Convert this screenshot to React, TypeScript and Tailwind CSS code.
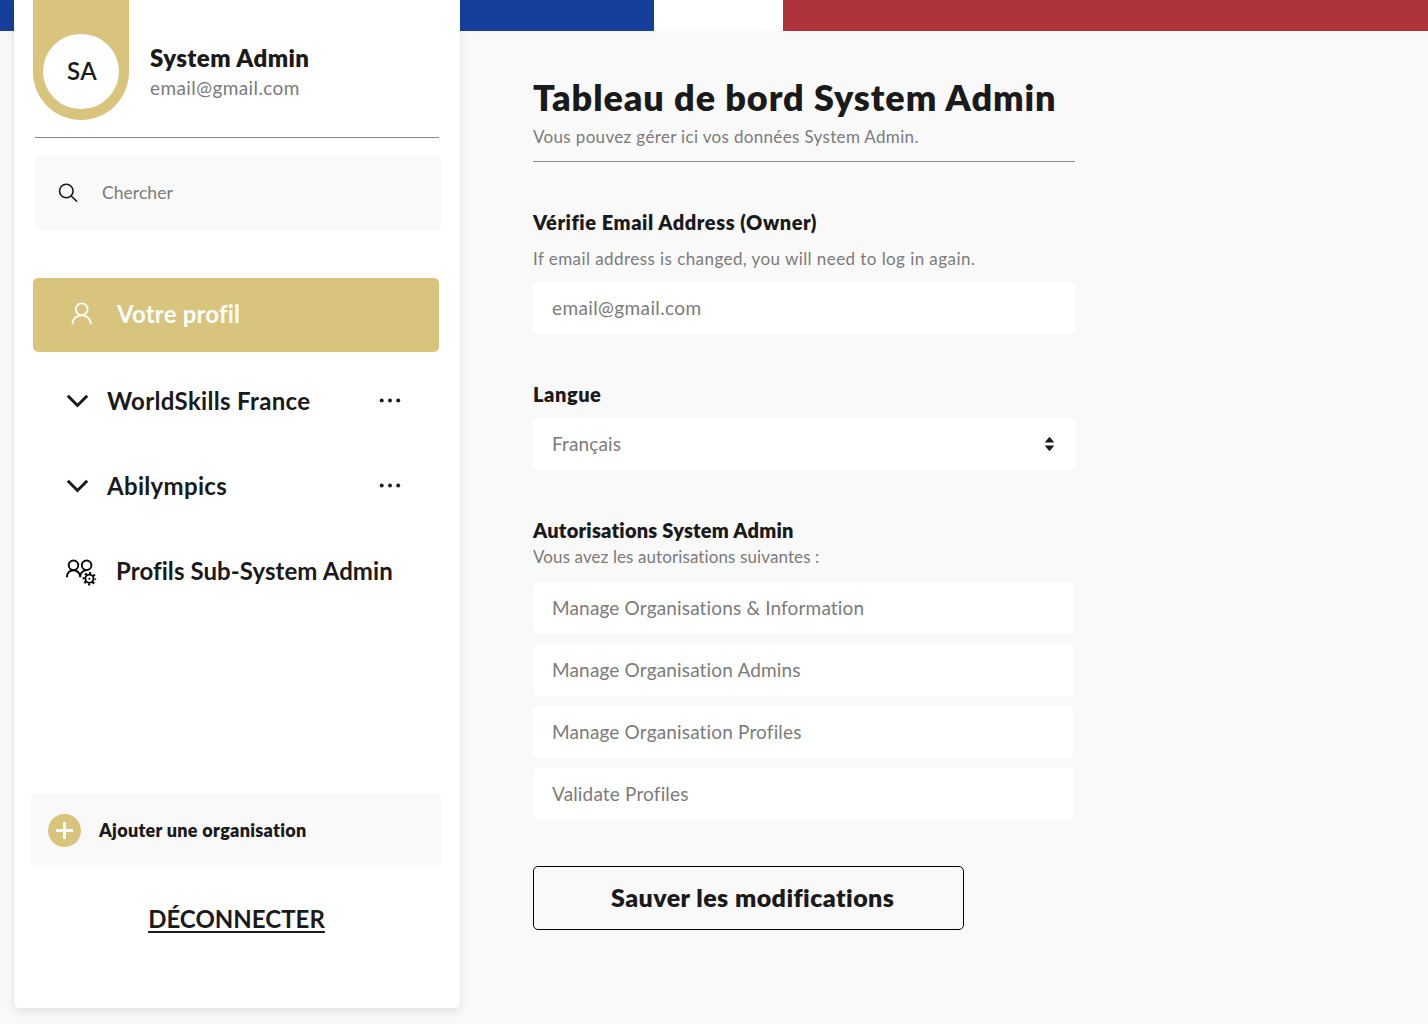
import type { ReactNode } from "react";

function UserIcon() {
  return (
    <svg width="24" height="26" viewBox="0 0 24 26" fill="none" stroke="currentColor" strokeWidth="1.8">
      <circle cx="11.7" cy="8.3" r="5.9" />
      <path d="M2.4 23.3v-.6a9.2 8.4 0 0 1 18.4 0v.6" />
    </svg>
  );
}

function SearchIcon() {
  return (
    <svg width="22" height="22" viewBox="0 0 22 22" fill="none" stroke="currentColor" strokeWidth="1.6" strokeLinecap="round">
      <circle cx="9.3" cy="9" r="6.8" />
      <path d="M14.3 14 19.6 19.2" />
    </svg>
  );
}

function ChevronIcon() {
  return (
    <svg width="24" height="16" viewBox="0 0 24 16" fill="none" stroke="currentColor" strokeWidth="3">
      <path d="M2.8 2.8 12.5 12.5 22.2 2.8" />
    </svg>
  );
}

function DotsIcon() {
  return (
    <svg width="24" height="6" viewBox="0 0 24 6" fill="currentColor">
      <circle cx="3.7" cy="2.5" r="2" />
      <circle cx="12" cy="2.5" r="2" />
      <circle cx="20.2" cy="2.5" r="2" />
    </svg>
  );
}

function TeamIcon() {
  return (
    <svg width="34" height="32" viewBox="0 0 34 32" fill="none" stroke="#000" strokeWidth="1.9">
      <circle cx="9.5" cy="9.3" r="4.8" />
      <circle cx="22.6" cy="9.3" r="4.8" />
      <path d="M2.8 21.3c0-4.3 3-7 6.7-7s6.7 2.8 6.7 7c0-3.9 2.4-6.700 5.800-6.900" />
      <circle cx="25.400" cy="22.700" r="4" strokeWidth="1.800" />
      <circle cx="25.400" cy="22.700" r="5.700" strokeWidth="2.200" strokeDasharray="2.100 2.377" strokeDashoffset="1.050" />
      <circle cx="25.400" cy="22.700" r="1" fill="#000" stroke="none" />
    </svg>
  );
}

function SortIcon() {
  return (
    <svg width="11" height="16" viewBox="0 0 11 16" fill="#1a1a1a">
      <path d="M5.500 .8 10.300 6.600H.7z" />
      <path d="M5.500 15.200.7 9.400h9.600z" />
    </svg>
  );
}

function OrgRow({ children }: { children: ReactNode }) {
  return (
    <div className="flex h-[85px] items-center pr-[37px] pl-[32px]">
      <ChevronIcon />
      <span className="ml-[18px] flex-1 text-[24px] leading-8 font-bold tracking-[0.32px]">{children}</span>
      <DotsIcon />
    </div>
  );
}

const permissions = [
  "Manage Organisations & Information",
  "Manage Organisation Admins",
  "Manage Organisation Profiles",
  "Validate Profiles",
];

export default function App() {
  return (
    <div className="h-[1024px] overflow-hidden bg-[#f9f9f9] font-['Lato',sans-serif] whitespace-nowrap text-[#1a1a1a]">
      <div className="flex h-[31px]">
        <div className="w-[654px] bg-[#163f9b]" />
        <div className="w-[129px] bg-white" />
        <div className="flex-1 bg-[#ac343a]" />
      </div>
      <div className="flex">
        <aside className="relative -mt-[31px] ml-[14px] h-[1008px] w-[446px] rounded-b-[5px] bg-white shadow-[0_3px_10px_rgba(0,0,0,0.1)]">
          <div className="flex h-[137px] items-start pl-[19px]">
            <div className="flex h-[119.5px] w-[96px] items-end justify-center rounded-b-full bg-[#d8c47d] pb-[10.5px]">
              <div className="flex size-[75.5px] items-center justify-center rounded-full bg-white pl-[2px] text-[24px] font-semibold tracking-[0.5px]">
                SA
              </div>
            </div>
            <div className="ml-[21px] pt-[44px]">
              <div className="text-[24px] leading-7 font-extrabold tracking-[0.43px]">System Admin</div>
              <div className="mt-[2px] text-[19px] leading-7 tracking-[0.4px] text-[#7b7b7b]">email@gmail.com</div>
            </div>
          </div>
          <div className="ml-[21px] h-px w-[404px] bg-[#878787]" />
          <div className="mt-[18px] ml-[21px] flex h-[74px] w-[406px] items-center rounded-[5px] bg-[#f9f9f9] pl-[22px]">
            <SearchIcon />
            <span className="ml-[23px] text-[17.5px] leading-6 tracking-[0.05px] text-[#7b7b7b]">Chercher</span>
          </div>
          <nav className="mt-[48px] ml-[19px] w-[406px]">
            <div className="mb-[6px] flex h-[74px] items-center rounded-[5px] bg-[#d8c47d] pb-[2px] pl-[37px] text-white">
              <UserIcon />
              <span className="ml-[23px] text-[24px] leading-8 font-bold tracking-[0.2px]">Votre profil</span>
            </div>
            <OrgRow>WorldSkills France</OrgRow>
            <OrgRow>Abilympics</OrgRow>
            <div className="flex h-[85px] items-center pl-[31px]">
              <div className="pt-[3px]">
                <TeamIcon />
              </div>
              <span className="ml-[18px] text-[24px] leading-8 font-bold tracking-[0.08px]">Profils Sub-System Admin</span>
            </div>
          </nav>
          <div className="mt-[181px] ml-[17px] flex h-[73px] w-[410px] items-center rounded-[5px] bg-[#f9f9f9] pl-[17px]">
            <div className="flex size-[33px] items-center justify-center rounded-full bg-[#d8c47d]">
              <svg width="17" height="17" viewBox="0 0 17 17" stroke="#fff" strokeWidth="3">
                <path d="M8.5 0v17M0 8.5h17" />
              </svg>
            </div>
            <span className="mb-px ml-[18px] text-[18px] leading-6 font-extrabold tracking-[0.28px]">Ajouter une organisation</span>
          </div>
          <div className="mt-[36px] pr-[1px] text-center text-[24px] leading-8 font-bold tracking-[0.02px] underline decoration-[1.5px] underline-offset-[3px]">
            DÉCONNECTER
          </div>
        </aside>
        <main className="ml-[73px] w-[543px] pt-[46px]">
          <h1 className="text-[36px] leading-10 font-extrabold tracking-[0.93px]">Tableau de bord System Admin</h1>
          <p className="mt-[8px] text-[17px] leading-6 tracking-[0.34px] text-[#7b7b7b]">Vous pouvez gérer ici vos données System Admin.</p>
          <div className="mt-[12px] h-px w-[542px] bg-[#878787]" />
          <h2 className="mt-[48px] text-[20px] leading-6 font-extrabold tracking-[0.55px]">Vérifie Email Address (Owner)</h2>
          <p className="mt-[13px] text-[17px] leading-6 tracking-[0.43px] text-[#7b7b7b]">
            If email address is changed, you will need to log in again.
          </p>
          <div className="mt-[11px] flex h-[52px] w-[542px] items-center rounded-[5px] bg-white pl-[19px] text-[19px] tracking-[0.38px] text-[#7b7b7b]">
            email@gmail.com
          </div>
          <h2 className="mt-[48px] text-[20px] leading-6 font-extrabold tracking-[0.55px]">Langue</h2>
          <div className="mt-[12px] flex h-[52px] items-center justify-between rounded-[5px] bg-white pr-[21px] pl-[19px] text-[19px] tracking-[0.12px] text-[#7b7b7b]">
            Français
            <SortIcon />
          </div>
          <h2 className="mt-[48px] text-[20px] leading-6 font-extrabold tracking-[0.22px]">Autorisations System Admin</h2>
          <p className="mt-[3px] text-[17px] leading-6 tracking-[0.1px] text-[#7b7b7b]">Vous avez les autorisations suivantes :</p>
          <ul className="mt-[13px] flex w-[541px] flex-col gap-[10px]">
            {permissions.map((p) => (
              <li key={p} className="flex h-[52px] items-center rounded-[5px] bg-white pl-[19px] text-[19px] tracking-[0.16px] text-[#7b7b7b]">
                {p}
              </li>
            ))}
          </ul>
          <button className="mt-[46px] flex h-[64px] w-[431px] items-center rounded-[5px] border border-black pl-[77px] text-[25px] font-extrabold tracking-[0.44px]">
            Sauver les modifications
          </button>
        </main>
      </div>
    </div>
  );
}
